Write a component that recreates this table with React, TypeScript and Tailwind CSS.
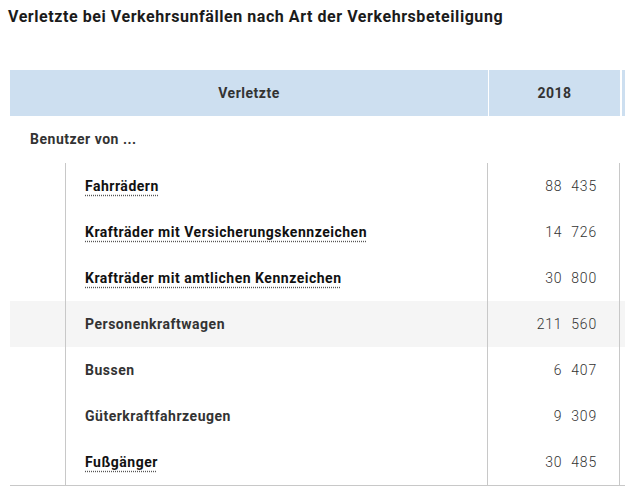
import React from 'react';

type Row = { label: string; value: string; term?: boolean; shaded?: boolean };

const rows: Row[] = [
  { label: 'Fahrrädern', value: '88\u2007435', term: true },
  { label: 'Krafträder mit Versicherungskennzeichen', value: '14\u2007726', term: true },
  { label: 'Krafträder mit amtlichen Kennzeichen', value: '30\u2007800', term: true },
  { label: 'Personenkraftwagen', value: '211\u2007560', shaded: true },
  { label: 'Bussen', value: '6\u2007407' },
  { label: 'Güterkraftfahrzeugen', value: '9\u2007309' },
  { label: 'Fußgänger', value: '30\u2007485', term: true },
];

export default function App() {
  return (
    <div className="w-[625px] h-[497px] overflow-hidden bg-white font-['Roboto',sans-serif]">
      <h1 className="pl-2 pt-[7px] text-[16px] leading-[20px] font-bold text-[#1b1b1b] tracking-[0.035em]">
        Verletzte bei Verkehrsunfällen nach Art der Verkehrsbeteiligung
      </h1>

      <div className="mt-[43px] ml-[10px] w-[640px] tracking-[0.032em]">
        {/* header */}
        <div className="flex h-[46px] text-[14px] font-bold text-[#333]">
          <div className="w-[478px] bg-[#cddff0] flex items-center justify-center">Verletzte</div>
          <div className="w-[131px] ml-px bg-[#cddff0] flex items-center justify-center">2018</div>
          <div className="flex-1 ml-[2px] bg-[#cddff0]" />
        </div>

        <div className="flex h-[47px] items-center pl-5 text-[14px] font-bold text-[#333]">
          Benutzer von ...
        </div>

        {rows.map((r) => (
          <div key={r.label} className={`flex h-[46px] text-[14px] ${r.shaded ? 'bg-[#f5f5f5]' : ''}`}>
            <div className="w-[56px] border-r border-[#c8c8c8]" />
            <div className="w-[422px] pl-[19px] flex items-center border-r border-[#c8c8c8]">
              {r.term ? (
                <span className="font-bold text-[#111] underline decoration-dotted decoration-[#555] underline-offset-[4px]">
                  {r.label}
                </span>
              ) : (
                <span className="font-bold text-[#333]">{r.label}</span>
              )}
            </div>
            <div className="w-[132px] pr-[22px] flex items-center justify-end border-r border-[#c8c8c8] font-light tabular-nums tracking-[0.06em] text-[#333] whitespace-pre">
              {r.value}
            </div>
            <div className="flex-1" />
          </div>
        ))}
        <div className="h-px bg-[#c8c8c8]" />
      </div>
    </div>
  );
}
